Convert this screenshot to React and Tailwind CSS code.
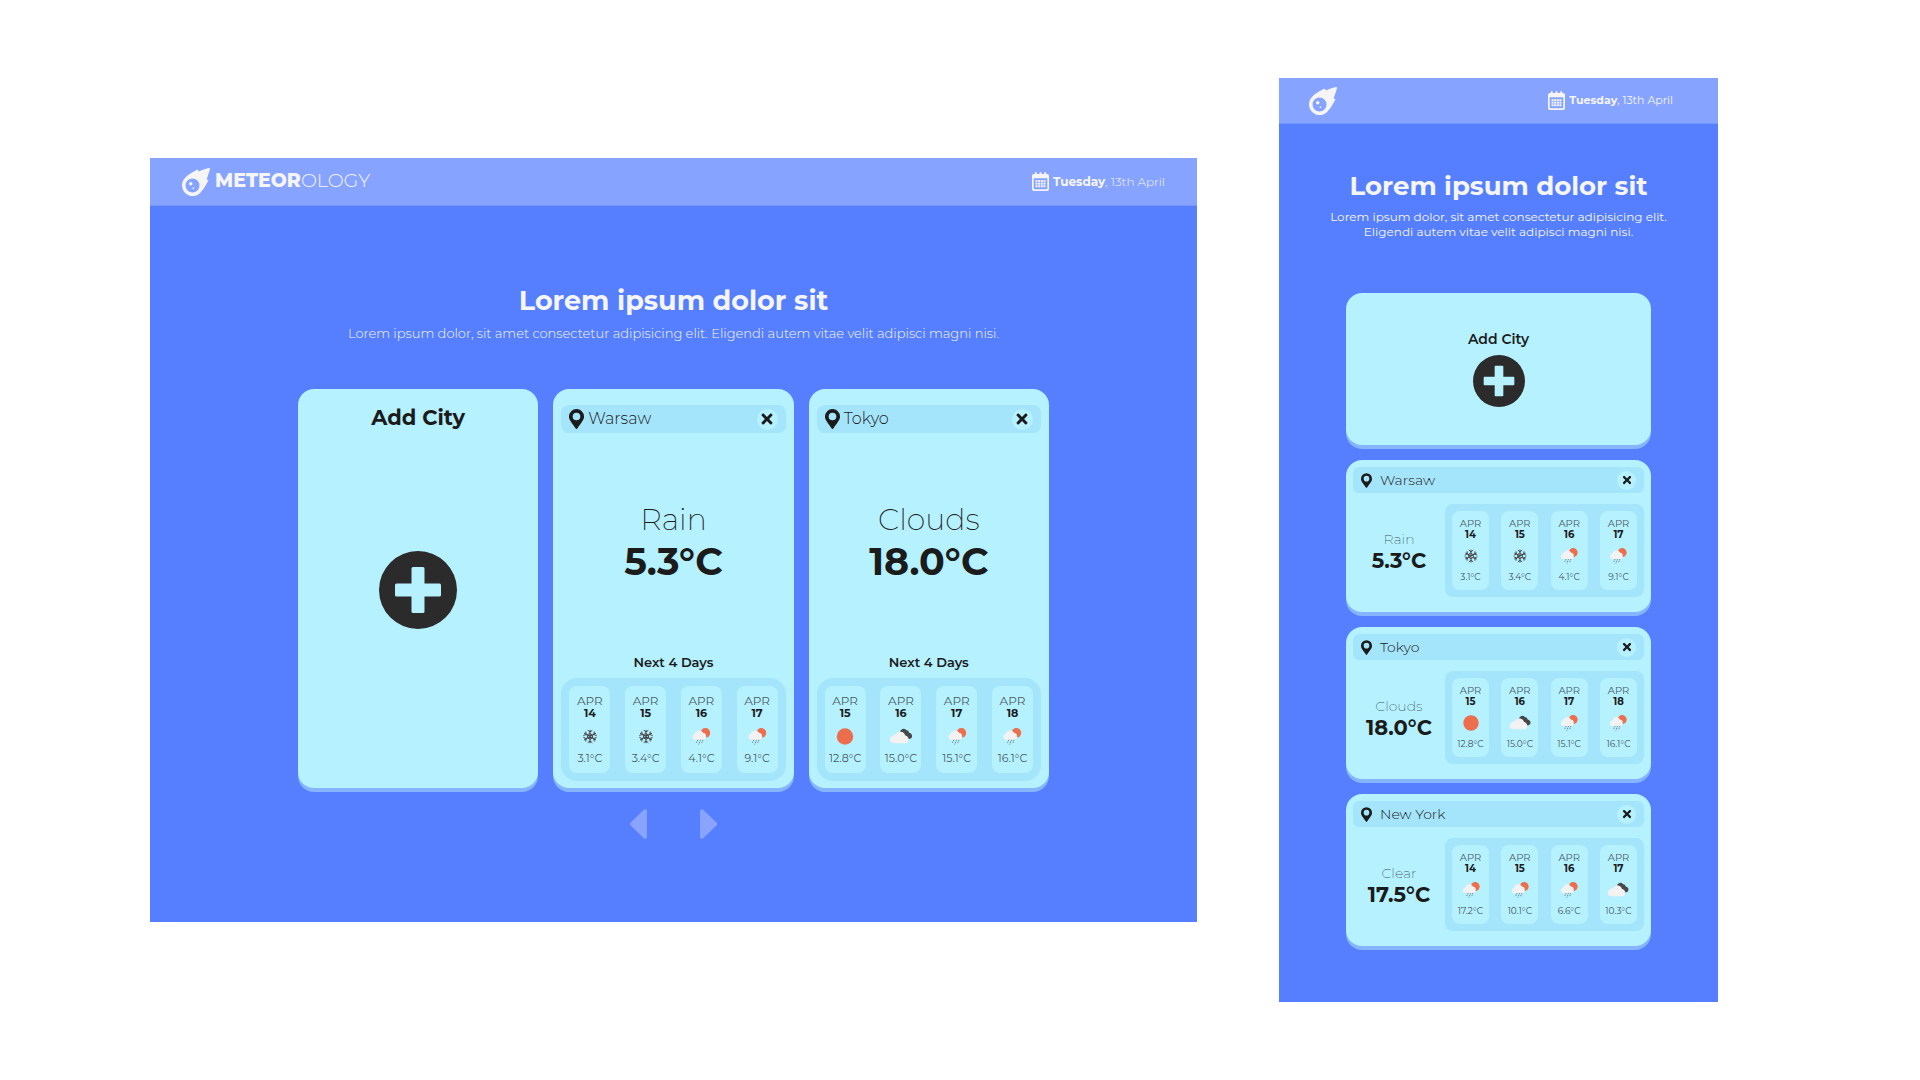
import { FaMeteor, FaTimes } from "react-icons/fa";

const day = (date, icon, temp) => ({ date, icon, temp });

const warsaw = {
  name: "Warsaw",
  sky: "Rain",
  temp: "5.3°C",
  days: [day("14", "snow", "3.1°C"), day("15", "snow", "3.4°C"), day("16", "shower", "4.1°C"), day("17", "shower", "9.1°C")],
};
const tokyo = {
  name: "Tokyo",
  sky: "Clouds",
  temp: "18.0°C",
  days: [day("15", "sun", "12.8°C"), day("16", "clouds", "15.0°C"), day("17", "shower", "15.1°C"), day("18", "shower", "16.1°C")],
};
const newYork = {
  name: "New York",
  sky: "Clear",
  temp: "17.5°C",
  days: [day("14", "shower", "17.2°C"), day("15", "shower", "10.1°C"), day("16", "shower", "6.6°C"), day("17", "clouds", "10.3°C")],
};

function CalendarIcon() {
  return (
    <svg viewBox="0 0 18 20" className="h-[19px] w-[17px] shrink-0" fill="currentColor" aria-hidden="true">
      <path
        fillRule="evenodd"
        d="M2 2h1V1a1 1 0 0 1 2 0v1h3V1a1 1 0 0 1 2 0v1h3V1a1 1 0 0 1 2 0v1h1a2 2 0 0 1 2 2v14a2 2 0 0 1-2 2H2a2 2 0 0 1-2-2V4a2 2 0 0 1 2-2zM1.800 6.600v10.900c0 .4.3.7.7.7h13c.4 0 .7-.3.7-.7V6.600z"
      />
      {[8.6, 11.3, 14].map((y) => [3.7, 6.5, 9.3, 12.1].map((x) => <rect key={x + "-" + y} x={x} y={y} width="2.2" height="2" />))}
    </svg>
  );
}

function PinIcon({ className }) {
  return (
    <svg viewBox="0 0 384 512" className={className} fill="currentColor" aria-hidden="true">
      <path
        fillRule="evenodd"
        d="M172 502C27 291 0 270 0 192a192 192 0 0 1 384 0c0 78-27 99-172 310a24 24 0 0 1-40 0zM192 290a98 98 0 1 0 0-196 98 98 0 0 0 0 196z"
      />
    </svg>
  );
}

function PlusIcon({ className }) {
  return (
    <svg viewBox="0 0 78 78" className={className} aria-hidden="true">
      <path
        fill="#2b2b2b"
        fillRule="evenodd"
        d="M39 0a39 39 0 1 1 0 78 39 39 0 0 1 0-78zM34 16a1.5 1.5 0 0 0-1.500 1.500V32.500H17.500A1.500 1.500 0 0 0 16 34v10a1.500 1.500 0 0 0 1.500 1.500H32.500v15a1.500 1.500 0 0 0 1.500 1.500h10a1.500 1.500 0 0 0 1.500-1.500v-15h15a1.500 1.500 0 0 0 1.500-1.500V34a1.500 1.500 0 0 0-1.500-1.500h-15v-15A1.500 1.500 0 0 0 44 16z"
      />
    </svg>
  );
}

function WeatherIcon({ kind, className }) {
  return (
    <svg viewBox="0 0 24 17" className={className} role="img" aria-label={kind}>
      {kind === "sun" && <circle cx="12" cy="8.500" r="8.200" fill="#ec6e4c" />}
      {kind === "snow" && (
        <g fill="none" stroke="#48484a" strokeLinecap="round" strokeLinejoin="round">
          <path strokeWidth="1.100" d="M12 2.200v12.600M6.500 5.300l11 6.400M17.500 5.300l-11 6.400" />
          <path strokeWidth="1" d="M12 5.700l2.500 1.400v2.800L12 11.300 9.500 9.900V7.100z" />
          <path
            strokeWidth="1"
            d="M10 2.500 12 4l2-1.500M10 14.500 12 13l2 1.500M5.700 7.500l2.400-1-.3-2.600M18.300 7.500l-2.400-1 .3-2.600M5.700 9.500l2.400 1-.3 2.600M18.300 9.500l-2.400 1 .3 2.600"
          />
        </g>
      )}
      {kind === "shower" && (
        <g>
          <circle cx="16.400" cy="4.900" r="4.800" fill="#ec6e4c" />
          <path
            fill="#f2f2f2"
            d="M6.200 11.900a3.100 3.100 0 0 1-.5-6.100A4.600 4.600 0 0 1 14.100 4.700a3.600 3.600 0 0 1 3 3.700 3.400 3.400 0 0 1-3.200 3.500z"
          />
          <path stroke="#48484a" strokeOpacity=".8" strokeWidth=".8" strokeDasharray="1.400 .7" fill="none" d="M8.900 11.700 7.400 15M11.500 11.700 9.700 16.600M14 11.700 12.600 15.600" />
        </g>
      )}
      {kind === "clouds" && (
        <g>
          <path
            fill="#48484a"
            d="M11 4.200a3.600 3.600 0 0 1 6.200-2.200 3.200 3.200 0 0 1 3 2.800 3.200 3.200 0 0 1 1.600 5.800c-1.500.8-3.400.4-4.400-.8z"
          />
          <path
            fill="#f2f2f2"
            d="M4 15.200a3.700 3.700 0 0 1-.3-7.200 2.700 2.700 0 0 1 2.600-1.300 5.400 5.400 0 0 1 10 .7 4.200 4.200 0 0 1 3.300 4.200 3.600 3.600 0 0 1-3.600 3.600z"
          />
        </g>
      )}
    </svg>
  );
}

function DateLabel({ className }) {
  return (
    <div className="flex items-center gap-1">
      <CalendarIcon />
      <p className={className}>
        <b className="font-bold">Tuesday</b>, 13th April
      </p>
    </div>
  );
}

function Forecast({ days, compact }) {
  return (
    <ul className={compact ? "flex grow justify-between rounded-lg bg-[#a5e5fc] p-[7px]" : "flex justify-between rounded-2xl bg-[#a5e5fc] p-2"}>
      {days.map((d) => (
        <li
          key={d.date}
          className={
            compact
              ? "flex w-[37px] flex-col items-center rounded-lg bg-[#b5f1ff] pt-[7px] pb-2 text-[10px] leading-[11px]"
              : "flex w-[41px] flex-col items-center rounded-lg bg-[#b5f1ff] pt-2 pb-2 text-[12px] leading-[13px]"
          }
        >
          <span className="text-[#1b1b1b]/75">APR</span>
          <b className={compact ? "font-bold" : "text-[11px] font-bold"}>{d.date}</b>
          <WeatherIcon kind={d.icon} className={compact ? "mt-2 h-4 w-6" : "mt-2 h-[17px] w-6"} />
          <span className={compact ? "mt-[7px] text-[9px] text-[#1b1b1b]/80" : "mt-[7px] text-[11px] text-[#1b1b1b]/75"}>{d.temp}</span>
        </li>
      ))}
    </ul>
  );
}

function CityBar({ name, compact }) {
  return (
    <header
      className={
        compact
          ? "flex h-[26px] items-center gap-2 rounded-md bg-[#a5e5fc] pr-2 pl-2"
          : "flex h-7 items-center gap-1 rounded-lg bg-[#a5e5fc] pr-2 pl-2"
      }
    >
      <PinIcon className={compact ? "h-[15px] w-[11px]" : "h-5 w-[15px]"} />
      <h2 className={compact ? "grow text-[14px] font-light" : "grow text-[16px] font-light"}>{name}</h2>
      <button
        type="button"
        aria-label={"Remove " + name}
        className={
          compact
            ? "flex size-[19px] items-center justify-center rounded-full bg-[#b5f1ff] text-[12px]"
            : "flex size-[21px] items-center justify-center rounded-full bg-[#b5f1ff] text-[16px]"
        }
      >
        <FaTimes />
      </button>
    </header>
  );
}

function CityCard({ city }) {
  return (
    <article className="rounded-2xl bg-[#b5f1ff] px-2 pt-4 pb-[7px] shadow-[0_4px_0_#86b4ff]">
      <CityBar name={city.name} />
      <div className="pt-[68px] pb-[67px] text-center">
        <p className="text-[30px] leading-[38px] font-extralight">{city.sky}</p>
        <p className="text-[38px] leading-[46px] font-bold">{city.temp}</p>
      </div>
      <h3 className="mb-1.5 text-center text-[13px] leading-5 font-semibold">Next 4 Days</h3>
      <Forecast days={city.days} />
    </article>
  );
}

function CityRow({ city }) {
  return (
    <article className="rounded-2xl bg-[#b5f1ff] px-[7px] pt-[7px] pb-[15px] shadow-[0_4px_0_#86b4ff]">
      <CityBar name={city.name} compact />
      <div className="mt-[11px] flex items-center">
        <div className="w-[92px] text-center">
          <p className="text-[14px] leading-5 font-extralight text-[#1b1b1b]/80">{city.sky}</p>
          <p className="text-[21px] leading-6 font-bold">{city.temp}</p>
        </div>
        <Forecast days={city.days} compact />
      </div>
    </article>
  );
}

function WidePanel() {
  return (
    <section className="bg-[#557fff]">
      <header className="flex h-12 items-center justify-between border-b border-[#7595ff] bg-[#86a3ff] px-8 text-[#f5f5f5]">
        <a href="#" className="flex items-center gap-[5px]">
          <FaMeteor className="size-7" />
          <span className="text-[19px] font-light">
            <b className="font-extrabold">METEOR</b>OLOGY
          </span>
        </a>
        <DateLabel className="text-[12px] font-light" />
      </header>
      <div className="px-[148px] pt-[79px] pb-[83px]">
        <h1 className="text-center text-[27px] leading-8 font-bold text-[#f5f5f5]">Lorem ipsum dolor sit</h1>
        <p className="-mx-8 mt-1.5 text-center text-[13px] leading-5 font-light text-[#f5f5f5]">
          Lorem ipsum dolor, sit amet consectetur adipisicing elit. Eligendi autem vitae velit adipisci magni nisi.
        </p>
        <div className="mt-[46px] grid grid-cols-3 gap-[15px]">
          <button type="button" className="flex flex-col items-center rounded-2xl bg-[#b5f1ff] pt-4 shadow-[0_4px_0_#86b4ff]">
            <span className="text-[21px] leading-[26px] font-bold">Add City</span>
            <span className="flex grow items-center pb-10">
              <PlusIcon className="size-[78px]" />
            </span>
          </button>
          <CityCard city={warsaw} />
          <CityCard city={tokyo} />
        </div>
        <nav className="mt-[21px] flex justify-center gap-[53px] text-[#88a4ff]">
          <button type="button" aria-label="Previous">
            <svg viewBox="0 0 17 30" className="h-[30px] w-[17px]" fill="currentColor" aria-hidden="true">
              <path d="M.6 13.400 13.800.8c1.200-1.200 3.200-.6 3.200 1.400v25.600c0 2-2 2.600-3.200 1.400L.6 16.600a2.200 2.200 0 0 1 0-3.200z" />
            </svg>
          </button>
          <button type="button" aria-label="Next">
            <svg viewBox="0 0 17 30" className="h-[30px] w-[17px]" fill="currentColor" aria-hidden="true">
              <path d="M16.400 13.400 3.200.8C2-.4 0 .2 0 2.200v25.600c0 2 2 2.600 3.200 1.400l13.200-12.600a2.200 2.200 0 0 0 0-3.200z" />
            </svg>
          </button>
        </nav>
      </div>
    </section>
  );
}

function NarrowPanel() {
  return (
    <section className="bg-[#557fff]">
      <header className="flex h-[46px] items-center justify-between border-b border-[#7595ff] bg-[#86a3ff] pr-[45px] pl-[30px] text-[#f5f5f5]">
        <a href="#" aria-label="Home">
          <FaMeteor className="size-7" />
        </a>
        <DateLabel className="text-[11px] font-normal" />
      </header>
      <div className="px-[67px] pt-[46px] pb-14">
        <h1 className="-mx-6 text-center text-[26px] leading-8 font-bold text-[#f5f5f5]">Lorem ipsum dolor sit</h1>
        <p className="-mx-6 mt-[7px] text-center text-[12px] leading-[15px] text-[#f5f5f5]">
          Lorem ipsum dolor, sit amet consectetur adipisicing elit. Eligendi autem vitae velit adipisci magni nisi.
        </p>
        <div className="mt-[54px] flex flex-col gap-[15px]">
          <button type="button" className="flex h-[152px] flex-col items-center justify-center gap-1.5 rounded-2xl bg-[#b5f1ff] pb-0.5 shadow-[0_4px_0_#86b4ff]">
            <span className="text-[14px] leading-5 font-semibold">Add City</span>
            <PlusIcon className="size-[52px]" />
          </button>
          <CityRow city={warsaw} />
          <CityRow city={tokyo} />
          <CityRow city={newYork} />
        </div>
      </div>
    </section>
  );
}

export default function App() {
  return (
    <main className="grid min-h-screen grid-cols-[1047fr_439fr] items-center gap-x-[82px] bg-white pr-[202px] pl-[150px] font-[Montserrat,Inter,sans-serif] text-[#1b1b1b]">
      <WidePanel />
      <NarrowPanel />
    </main>
  );
}
